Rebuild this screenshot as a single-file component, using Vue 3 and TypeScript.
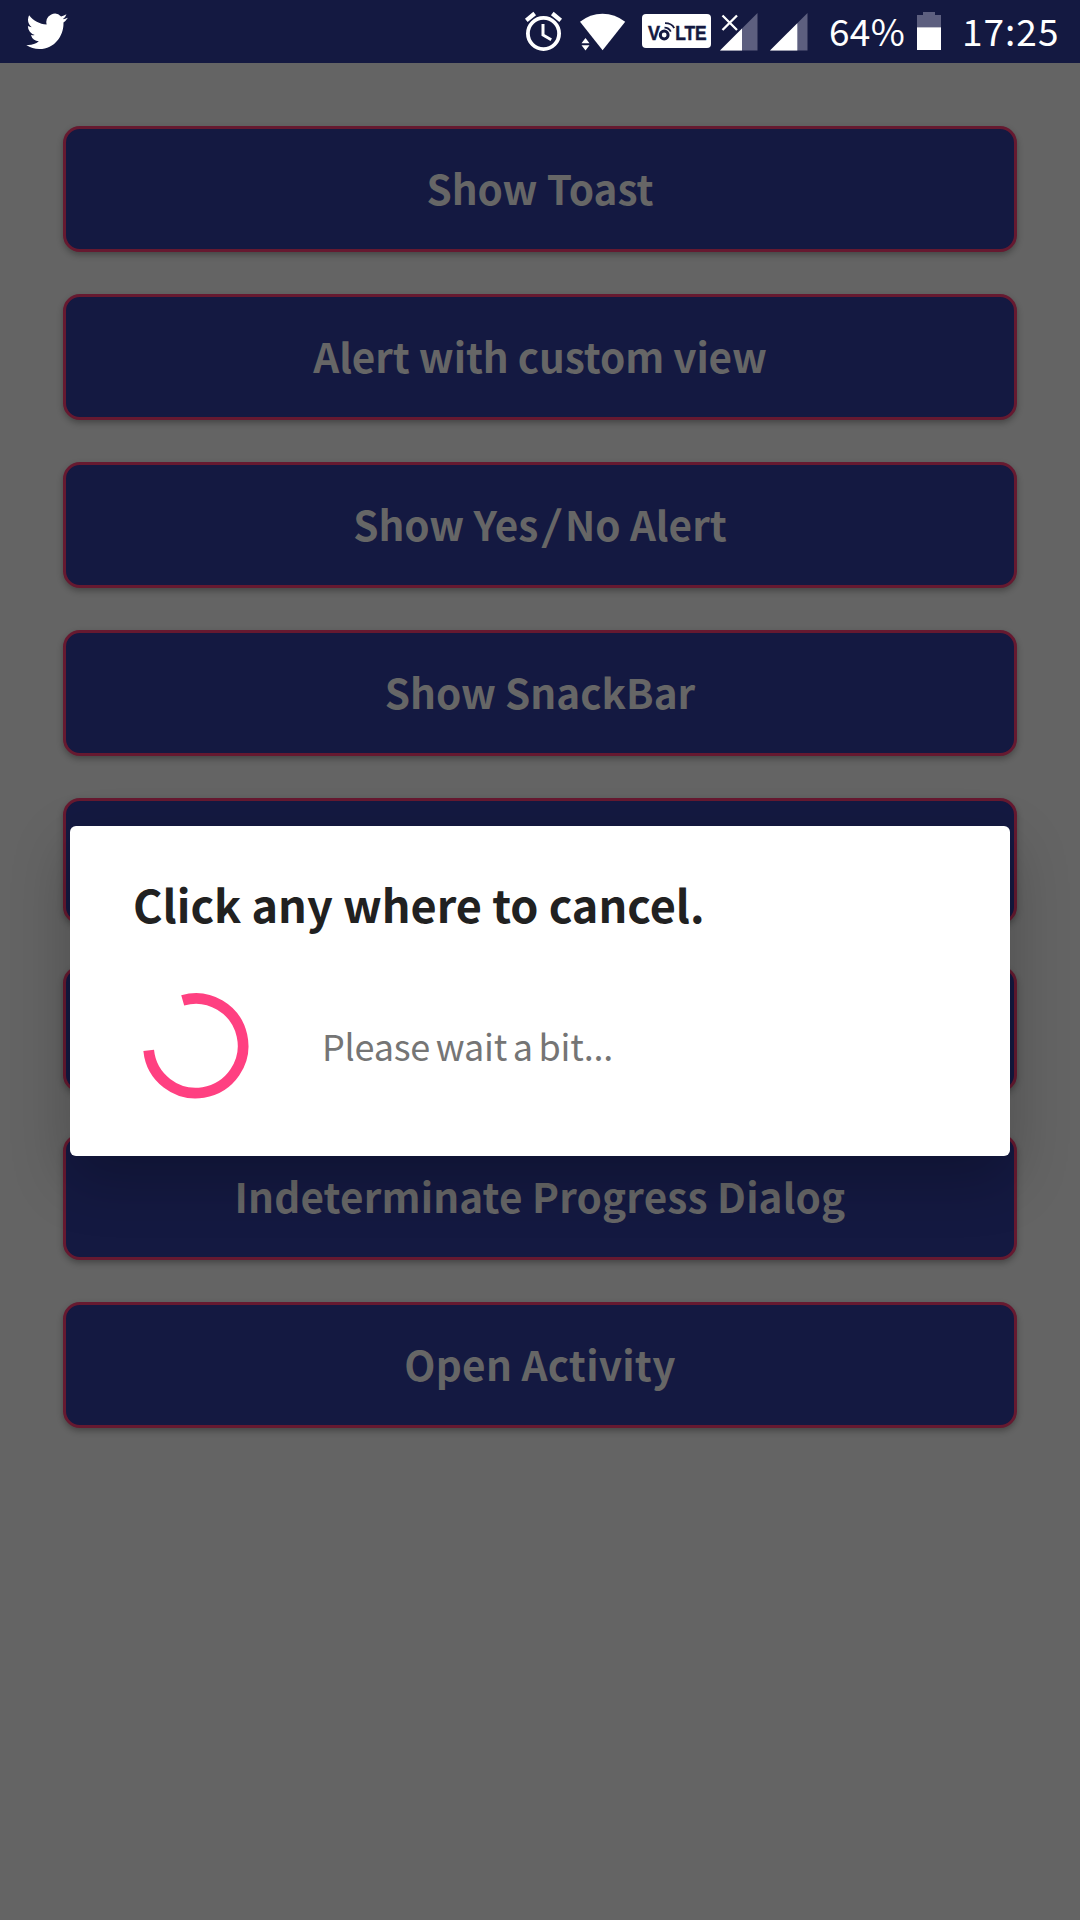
<script setup lang="ts">
interface Action {
  label: string
  tracking: number
}

const actions: Action[] = [
  { label: 'Show Toast', tracking: 0 },
  { label: 'Alert with custom view', tracking: -0.1 },
  { label: 'Show Yes/No Alert', tracking: 0 },
  { label: 'Show SnackBar', tracking: 0 },
  { label: '', tracking: 0 },
  { label: '', tracking: 0 },
  { label: 'Indeterminate Progress Dialog', tracking: 0.15 },
  { label: 'Open Activity', tracking: 0.25 },
]
</script>

<template>
  <div class="screen">
    <header class="status">
      <svg class="bird" width="80" height="63" viewBox="0 0 80 63">
        <path
          transform="translate(26.3 9.6) scale(1.725 1.81)"
          fill="#fff"
          d="M23.953 4.57a10 10 0 01-2.825.775 4.958 4.958 0 002.163-2.723c-.951.555-2.005.959-3.127 1.184a4.92 4.92 0 00-8.384 4.482C7.69 8.095 4.067 6.13 1.64 3.162a4.822 4.822 0 00-.666 2.475c0 1.71.87 3.213 2.188 4.096a4.904 4.904 0 01-2.228-.616v.06a4.923 4.923 0 003.946 4.827 4.996 4.996 0 01-2.212.085 4.936 4.936 0 004.604 3.417 9.867 9.867 0 01-6.102 2.105c-.39 0-.779-.023-1.17-.067a13.995 13.995 0 007.557 2.209c9.053 0 13.998-7.496 13.998-13.985 0-.21 0-.42-.015-.63A9.935 9.935 0 0024 4.59z"
        />
      </svg>
      <svg width="50" height="63" viewBox="520 0 50 63" fill="none" stroke="#fff">
        <circle cx="543.5" cy="33.5" r="15.6" stroke-width="3.8" />
        <path d="M526.3 20.3l8.4-6.8M552.3 13.5l8.4 6.8" stroke-width="4.2" />
        <path d="M543 24v11l8.2 4.8" stroke-width="3" />
      </svg>
      <svg width="65" height="63" viewBox="570 0 65 63" fill="#fff">
        <path d="M580 21.8Q590 13.7 602.5 13.7T625.2 21.8L602.6 50.3z" />
        <path d="M581.5 43.2l4-5.2 4 5.2zM581.5 45.3h8l-4 5.2z" />
      </svg>
      <svg width="80" height="63" viewBox="635 0 80 63">
        <rect x="642" y="14" width="69" height="34" rx="4" fill="#fff" />
        <g class="volte" fill="#141941" stroke="#141941" stroke-width=".5">
          <text x="648" y="39.5" textLength="12" lengthAdjust="spacingAndGlyphs">V</text>
          <text x="675.2" y="39.5" textLength="31.500" lengthAdjust="spacingAndGlyphs">LTE</text>
        </g>
        <g fill="none" stroke="#141941">
          <circle cx="664.2" cy="35" r="3.9" stroke-width="3" />
          <path d="M664.5 27.600q4.300 0 6.300 4M665 23.200q6.800 0 9.200 5" stroke-width="1.8" />
        </g>
      </svg>
      <svg width="50" height="63" viewBox="715 0 50 63">
        <path d="M757.5 13v37.500h-37.500z" fill="#5d5f7f" />
        <path d="M742 28.500v22h-22z" fill="#fff" />
        <path d="M722.500 15.500l14.500 14.500m0-14.500l-14.500 14.500" stroke="#fff" stroke-width="2.300" />
      </svg>
      <svg width="50" height="63" viewBox="765 0 50 63">
        <path d="M807.500 13v37.500h-37.500z" fill="#5d5f7f" />
        <path d="M797.300 23.200v27.300h-27.300z" fill="#fff" />
      </svg>
      <span class="percent">64%</span>
      <svg width="40" height="63" viewBox="910 0 40 63">
        <path d="M923 12h12v3h6v12.500h-24V15h6z" fill="#5d5f7f" />
        <path d="M917 27.300h24V50h-24z" fill="#fff" />
      </svg>
      <span class="clock">17:25</span>
    </header>

    <main class="actions">
      <button
        v-for="(action, i) in actions"
        :key="i"
        class="action"
        :style="{ letterSpacing: action.tracking + 'px' }"
      >
        <template v-if="action.label.includes('/')">
          <span>{{ action.label.split('/')[0] }}<span class="slash">/</span>{{ action.label.split('/')[1] }}</span>
        </template>
        <template v-else>{{ action.label }}</template>
      </button>
    </main>

    <section class="dialog">
      <h2 class="title">Click any where to cancel.</h2>
      <div class="body">
        <svg width="120" height="120" viewBox="0 0 120 120">
          <path d="M46.700 14.300A47.300 47.300 0 1 1 12.700 64.400" fill="none" stroke="#ff4081" stroke-width="10.700" />
        </svg>
        <p class="message">Please wait a bit...</p>
      </div>
    </section>
  </div>
</template>

<style>
body {
  background: #646464;
}
</style>

<style scoped>
.screen {
  position: relative;
  width: 1080px;
  height: 1920px;
  overflow: hidden;
  background: #646464;
  font-family: "Noto Sans CJK JP", "Noto Sans", sans-serif;
}

.status {
  display: flex;
  height: 63px;
  background: #141941;
  color: #fff;
  font-size: 37px;
  line-height: 60px;
}

.status svg {
  flex: none;
}

.bird {
  margin-right: 440px;
}

.volte {
  font: bold 20px "Liberation Sans", sans-serif;
}

.percent,
.clock {
  box-sizing: border-box;
  flex: none;
  white-space: nowrap;
}

.percent {
  width: 95px;
  padding-left: 14px;
  letter-spacing: 0.3px;
}

.clock {
  width: 130px;
  padding-left: 12px;
  letter-spacing: 1px;
}

.actions {
  display: flex;
  flex-direction: column;
  gap: 42px;
  padding: 63px;
}

.action {
  box-sizing: border-box;
  display: flex;
  align-items: center;
  justify-content: center;
  height: 126px;
  padding: 0 0 3px;
  border: 3px solid #661930;
  border-radius: 17px;
  background: #141941;
  box-shadow: 0 3px 6px rgba(0, 0, 0, 0.3);
  color: #666;
  font-family: inherit;
  font-size: 40.5px;
  font-weight: 700;
  line-height: 60px;
  white-space: nowrap;
}

.slash {
  display: inline-block;
  margin: 0 5.5px;
  font-weight: 500;
  transform: scaleX(1.4);
}

.dialog {
  position: absolute;
  top: 826px;
  left: 70px;
  box-sizing: border-box;
  width: 940px;
  height: 330px;
  padding: 47px 66px 50px;
  border-radius: 6px;
  background: #fff;
  box-shadow: 0 22px 60px rgba(0, 0, 0, 0.23);
}

.title {
  margin: 0 0 53px -3px;
  color: #212121;
  font-size: 45px;
  font-weight: 700;
  line-height: 61px;
  height: 60px;
  white-space: nowrap;
}

.body {
  display: flex;
  align-items: center;
  gap: 66px;
}

.message {
  margin: 0 0 3px;
  color: #757575;
  font-size: 36px;
  line-height: 54px;
  letter-spacing: -0.25px;
  word-spacing: -2px;
}
</style>
